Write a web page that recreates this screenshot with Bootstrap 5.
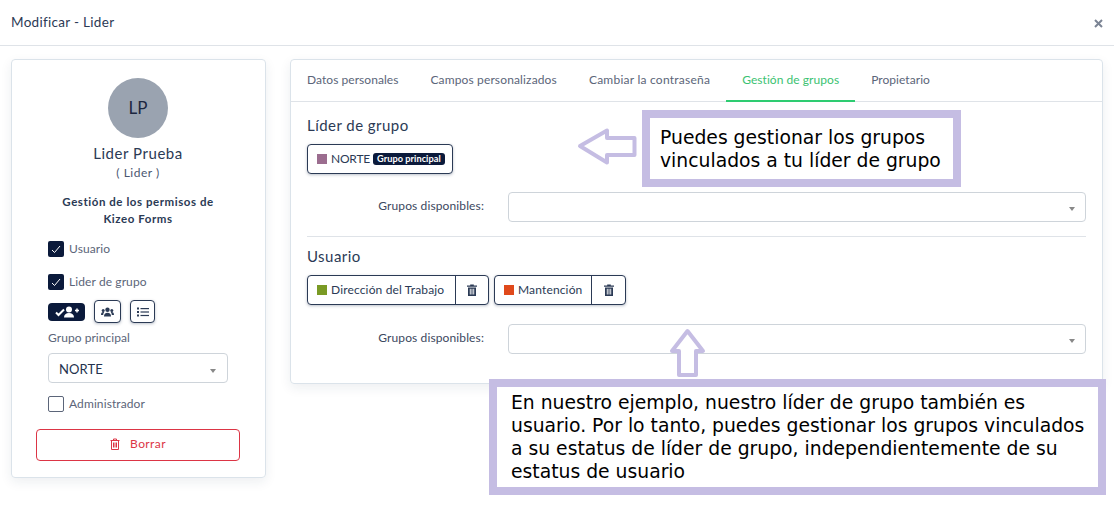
<!DOCTYPE html>
<html lang="es">
<head>
<meta charset="utf-8">
<title>Modificar - Lider</title>
<link href="https://cdn.jsdelivr.net/npm/bootstrap@5.3.0/dist/css/bootstrap.min.css" rel="stylesheet">
<style>
html,body{height:511px;overflow:hidden;background:#fff}
body{font-family:"Lato","Noto Sans",sans-serif;color:#2b3a55;font-size:12px;position:relative}
.top-bar{height:46px;padding:0 11px;border-bottom:1px solid #dfe3e8;font-size:13.5px;letter-spacing:.3px}
.close-x{color:#7b8494;line-height:0;margin-top:1px}
.main-area{padding:13px 11px 0;gap:24px}
.side-card{width:255px;height:419px;border:1px solid #dbe3ea;border-radius:4px;box-shadow:0 4px 12px rgba(30,50,80,.08);padding:18px 25px 0 24px;flex:none}
.avatar-disc{width:60px;height:60px;border-radius:50%;background:#9aa3b0;color:#1c2740;font-size:17px;margin:0 auto}
.person-name{font-size:15px;line-height:20px;margin-top:5px;letter-spacing:.55px;color:#2b3a55}
.person-role{font-size:12px;line-height:18px;letter-spacing:.5px;color:#4a5670;margin-top:1px}
.perm-title{font-size:11.5px;line-height:17px;font-weight:700;margin-top:11px;letter-spacing:.55px;padding:0 22px}
.check-row{height:16px;padding-left:12px;gap:5px;color:#5b6579;font-size:12px;letter-spacing:.1px}
.check-first{margin-top:14px}
.check-next{margin-top:17px}
.tick-box{width:16px;height:16px;border-radius:2px;background:#0b1a3b;flex:none}
.tick-empty{background:#fff;border:1px solid #5b6579}
.role-btns{margin:10px 0 0 12px;gap:9px;height:23px}
.role-solid{width:37px;height:18px;border-radius:4px;background:#0b1a3b}
.role-outline{height:23px;border:1px solid #2b3a55;border-radius:4px;background:#fff;box-shadow:0 1px 3px rgba(30,50,80,.3)}
.role-team{width:27px}
.role-list{width:25px}
.field-label{margin:7px 0 0 12px;line-height:16px;color:#5b6579;letter-spacing:.05px}
.fake-select{height:30px;border:1px solid #ced4da;border-radius:4px;background:#fff}
.side-select{width:180px;margin:7px 0 13px 12px;padding:3px 11px 0 10px;font-size:13px;color:#24324e;letter-spacing:.1px}
.caret-mark{width:0;height:0;border-left:3.5px solid transparent;border-right:3.5px solid transparent;border-top:4px solid #888;margin-top:3px}
.del-btn{height:32px;border:1px solid #dc3545;border-radius:4px;color:#dc3545;margin-top:17px;gap:10px;font-size:12px;letter-spacing:.4px;padding-bottom:2px}
.tab-card{width:813px;height:325px;border:1px solid #dbe3ea;border-radius:4px;box-shadow:0 4px 12px rgba(30,50,80,.08);flex:none}
.tab-line{height:42px;border-bottom:1px solid #dfe3e8;padding:0;margin:0;list-style:none}
.tab-item{height:42px;padding:0 16px;line-height:40px;color:#5b6579;font-size:12px;letter-spacing:.05px}
.tab-mid{letter-spacing:.14px}
.tab-wide{letter-spacing:.24px}
.tab-on{color:#3bc271;border-bottom:2px solid #2ecc71}
.tab-body{padding:0 16px}
.sect-head{font-size:15px;line-height:20px;letter-spacing:.45px;color:#2b3a55}
.sect-first{margin-top:13px}
.chip-row{margin-top:9px;gap:5px}
.chip-group{height:30px;border:1px solid #2b3a55;border-radius:4px;box-shadow:0 1px 3px rgba(30,50,80,.3);background:#fff;font-size:12px;letter-spacing:.15px;color:#2b3a55;white-space:nowrap}
.chip-norte{width:146px}
.chip-work{width:182px}
.chip-maint{width:132px}
.chip-text{padding:0 0 0 9px;gap:4px;height:100%;min-width:0}
.chip-del{width:33px;height:100%;border-left:1px solid #2b3a55;flex:none}
.chip-maint .chip-del{width:34px}
.swatch{width:10px;height:10px;flex:none}
.tight-name{letter-spacing:-.2px;margin-right:-1px}
.main-tag{background:#0b1a3b;color:#fff;font-size:9.200px;font-weight:700;border-radius:3px;padding:0 4px;line-height:12px;letter-spacing:.05px;white-space:nowrap}
.group-field{height:30px;margin-top:18px}
.group-field-low{margin-top:19px}
.group-label{width:177px;text-align:right;color:#3c4860;font-size:12px;letter-spacing:.12px;flex:none;padding-bottom:2px}
.group-select{width:578px;margin-left:24px;padding:0 10px;flex:none}
.sep-line{border-top:1px solid #dfe3e8;margin:14px 0 9px}
.note-box{position:absolute;border:8px solid #c5bde3;background:#fff;color:#000;font-family:"DejaVu Sans",sans-serif;font-size:18.770px;line-height:23px}
.note-one{left:642px;top:110px;width:319px;height:77px;padding:8px 6px 8px 10px}
.note-two{left:489px;top:379px;width:617px;height:116px;padding:4px 8px 3px 14px}
.note-arrow{position:absolute;overflow:visible}
.arrow-left{left:577px;top:127px}
.arrow-up{left:668px;top:328px}
</style>
</head>
<body>
<header class="top-bar d-flex align-items-center justify-content-between">
  <span>Modificar - Lider</span>
  <span class="close-x"><svg width="9" height="9" viewBox="0 0 9 9"><path d="M1 1l7 7M8 1l-7 7" stroke="currentColor" stroke-width="2"/></svg></span>
</header>
<main class="main-area d-flex align-items-start">
  <section class="side-card">
    <div class="avatar-disc d-flex align-items-center justify-content-center">LP</div>
    <div class="person-name text-center">Lider Prueba</div>
    <div class="person-role text-center">( Lider )</div>
    <div class="perm-title text-center">Gestión de los permisos de Kizeo Forms</div>
    <div class="check-row check-first d-flex align-items-center">
      <span class="tick-box d-flex align-items-center justify-content-center"><svg width="10" height="9" viewBox="0 0 10 9"><path d="M1 5l2.500 2.500L9 1" fill="none" stroke="#fff" stroke-width="1"/></svg></span>Usuario
    </div>
    <div class="check-row check-next d-flex align-items-center">
      <span class="tick-box d-flex align-items-center justify-content-center"><svg width="10" height="9" viewBox="0 0 10 9"><path d="M1 5l2.500 2.500L9 1" fill="none" stroke="#fff" stroke-width="1"/></svg></span>Lider de grupo
    </div>
    <div class="role-btns d-flex align-items-center">
      <span class="role-solid d-flex align-items-center justify-content-center">
        <svg width="24" height="12" viewBox="0 0 24 12"><path d="M1 6.500l2.500 2.500L9 3.500" fill="none" stroke="#fff" stroke-width="2"/><circle cx="14" cy="3.500" r="3" fill="#fff"/><path d="M9 11.500c0-3 2-4.500 5-4.500s5 1.500 5 4.500z" fill="#fff"/><path d="M20 4.500h4M22 2.500v4" stroke="#fff" stroke-width="1.500"/></svg>
      </span>
      <span class="role-outline role-team d-flex align-items-center justify-content-center">
        <svg width="13" height="10" viewBox="0 0 13 10" fill="#2b3a55"><circle cx="6.500" cy="2.800" r="2.200"/><path d="M3 9.500c0-2.600 1.300-3.700 3.500-3.700S10 6.900 10 9.500z"/><circle cx="2.200" cy="3.400" r="1.500"/><circle cx="10.800" cy="3.400" r="1.500"/><path d="M0 8c0-2 .8-3 2.200-3 .4 0 .7.100 1 .2C2.500 6 2.200 7 2.200 8zM13 8c0-2-.8-3-2.200-3-.4 0-.7.100-1 .2.700.8 1 1.800 1 2.800z"/></svg>
      </span>
      <span class="role-outline role-list d-flex align-items-center justify-content-center">
        <svg width="12" height="10" viewBox="0 0 12 10" fill="#2b3a55"><rect x="0" y="0.500" width="2" height="2"/><rect x="0" y="4" width="2" height="2"/><rect x="0" y="7.500" width="2" height="2"/><rect x="3.500" y="1" width="8.500" height="1.200"/><rect x="3.500" y="4.400" width="8.500" height="1.200"/><rect x="3.500" y="7.900" width="8.500" height="1.200"/></svg>
      </span>
    </div>
    <div class="field-label">Grupo principal</div>
    <div class="fake-select side-select d-flex align-items-center justify-content-between">NORTE<span class="caret-mark"></span></div>
    <div class="check-row d-flex align-items-center"><span class="tick-box tick-empty"></span>Administrador</div>
    <div class="del-btn d-flex align-items-center justify-content-center">
      <svg width="10" height="12" viewBox="0 0 10 12" fill="none" stroke="#dc3545" stroke-width="1"><path d="M.5 2.500h9M3.500 2.500V1h3v1.500M1.500 2.500v9h7v-9M3.500 4.500v5M5 4.500v5M6.500 4.500v5"/></svg>
      <span>Borrar</span>
    </div>
  </section>
  <section class="tab-card">
    <ul class="tab-line d-flex">
      <li class="tab-item">Datos personales</li>
      <li class="tab-item tab-mid">Campos personalizados</li>
      <li class="tab-item tab-wide">Cambiar la contraseña</li>
      <li class="tab-item tab-on">Gestión de grupos</li>
      <li class="tab-item">Propietario</li>
    </ul>
    <div class="tab-body">
      <div class="sect-head sect-first">Líder de grupo</div>
      <div class="chip-row d-flex">
        <div class="chip-group chip-norte d-flex align-items-center">
          <span class="chip-text d-flex align-items-center"><span class="swatch" style="background:#9b6d8f"></span><span class="tight-name">NORTE</span> <span class="main-tag">Grupo principal</span></span>
        </div>
      </div>
      <div class="group-field d-flex align-items-center">
        <span class="group-label">Grupos disponibles:</span>
        <span class="fake-select group-select d-flex align-items-center justify-content-end"><span class="caret-mark"></span></span>
      </div>
      <div class="sep-line"></div>
      <div class="sect-head">Usuario</div>
      <div class="chip-row d-flex">
        <div class="chip-group chip-work d-flex align-items-center">
          <span class="chip-text d-flex align-items-center flex-grow-1"><span class="swatch" style="background:#7a9a25"></span>Dirección del Trabajo</span>
          <span class="chip-del d-flex align-items-center justify-content-center"><svg width="10" height="12" viewBox="0 0 10 12" fill="#2b3a55"><path d="M0 1.500h3.200V.5h3.600v1H10v1.200H0zM1 3.500h8V12H1zM2.800 4.800v5.700h.9V4.800zM4.550 4.800v5.700h.9V4.800zM6.300 4.800v5.700h.9V4.800z" fill-rule="evenodd"/></svg></span>
        </div>
        <div class="chip-group chip-maint d-flex align-items-center">
          <span class="chip-text d-flex align-items-center flex-grow-1"><span class="swatch" style="background:#e0491b"></span>Mantención</span>
          <span class="chip-del d-flex align-items-center justify-content-center"><svg width="10" height="12" viewBox="0 0 10 12" fill="#2b3a55"><path d="M0 1.500h3.200V.5h3.600v1H10v1.200H0zM1 3.500h8V12H1zM2.800 4.800v5.700h.9V4.800zM4.550 4.800v5.700h.9V4.800zM6.300 4.800v5.700h.9V4.800z" fill-rule="evenodd"/></svg></span>
        </div>
      </div>
      <div class="group-field group-field-low d-flex align-items-center">
        <span class="group-label">Grupos disponibles:</span>
        <span class="fake-select group-select d-flex align-items-center justify-content-end"><span class="caret-mark"></span></span>
      </div>
    </div>
  </section>
</main>
<svg class="note-arrow arrow-left" width="61" height="40" viewBox="0 0 61 40"><path d="M3 19L30 3.500V11H57.500V28H30V35.500Z" fill="#fff" stroke="#c5bde3" stroke-width="4" stroke-linejoin="round"/></svg>
<svg class="note-arrow arrow-up" width="39" height="50" viewBox="0 0 39 50"><path d="M19.500 3L35 23H28V47H11V23H4Z" fill="#fff" stroke="#c5bde3" stroke-width="4" stroke-linejoin="round"/></svg>
<div class="note-box note-one">Puedes gestionar los grupos vinculados a tu líder de grupo</div>
<div class="note-box note-two">En nuestro ejemplo, nuestro líder de grupo también es usuario. Por lo tanto, puedes gestionar los grupos vinculados a su estatus de líder de grupo, independientemente de su estatus de usuario</div>
<script src="https://cdn.jsdelivr.net/npm/bootstrap@5.3.0/dist/js/bootstrap.bundle.min.js"></script>
</body>
</html>
